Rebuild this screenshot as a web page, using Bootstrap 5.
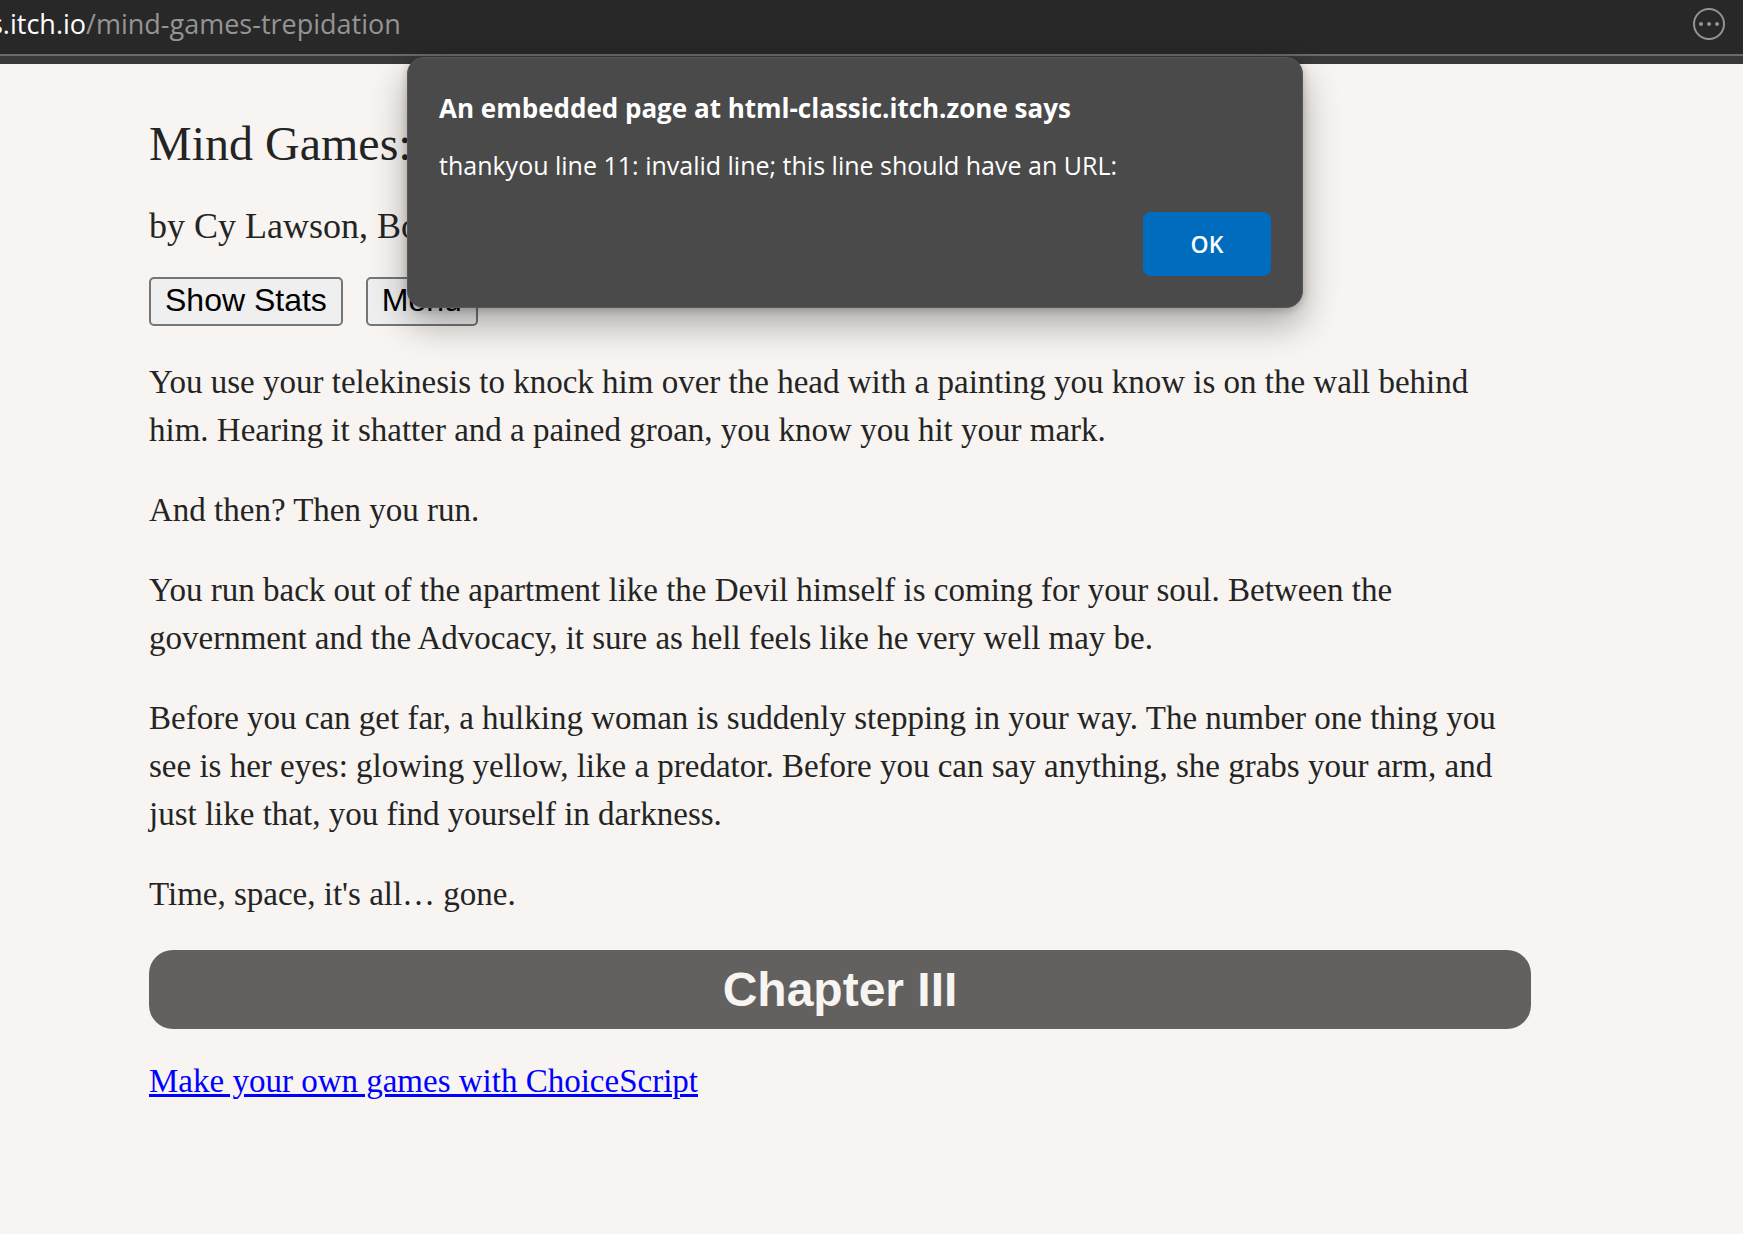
<!DOCTYPE html>
<html lang="en">
<head>
<meta charset="utf-8">
<meta name="viewport" content="width=device-width, initial-scale=1">
<title>Mind Games</title>
<link href="https://cdn.jsdelivr.net/npm/bootstrap@5.3.0/dist/css/bootstrap.min.css" rel="stylesheet">
<style>
body { background: #f7f4f1; color: #242424; font-family: "Liberation Serif", serif; font-size: 33px; line-height: 48px; }
.ui-text { font-family: "Open Sans", "Noto Sans", sans-serif; }
.address-bar { height: 56px; padding: 0 18px 6px 0; background: #282828; border-bottom: 2px solid #6a6a6a; color: #949494; font-size: 27px; line-height: 48px; overflow: hidden; }
.address-bar a { color: inherit; margin-left: -10px; }
.address-host { color: #fff; }
.toolbar-edge { height: 8px; background: #393939; }
.story { padding: 48px 212px 48px 149px; }
.story-title { font-size: 48px; line-height: 64px; margin-bottom: 26px; font-weight: 400; }
.story-by { font-size: 36px; line-height: 48px; margin-bottom: 27px; font-weight: 400; }
.story-actions { gap: 23px; margin-bottom: 32px; }
.story-actions button { height: 49px; padding: 0 14px 2px; border: 2px solid #767676; border-radius: 5px; background: #efefef; color: #000; font-family: "Liberation Sans", sans-serif; font-size: 32px; line-height: 43px; }
.story p { margin-bottom: 32px; }
.chapter { background: #62615f; color: #f7f4f1; border-radius: 24px; font-family: "Liberation Sans", sans-serif; font-size: 48px; line-height: 79px; font-weight: 700; margin-bottom: 28px; }
.story-link { color: #00f; text-decoration-thickness: 3px; }
.alert-box { left: 407px; top: 57px; width: 896px; max-width: 100%; padding: 31px; background: #4a4a4a; border: 1px solid #575757; border-radius: 17px; color: #fff; box-shadow: 0 16px 36px rgba(0,0,0,.32), 0 2px 8px rgba(0,0,0,.2); }
.alert-title { font-size: 26px; line-height: 38px; font-weight: 700; margin-bottom: 18px; }
.alert-text { font-size: 25px; line-height: 40px; margin-bottom: 27px; }
.alert-ok { width: 128px; height: 64px; border: 0; border-radius: 8px; background: #006cbe; color: #fff; font-size: 23px; font-weight: 600; }
</style>
</head>
<body>
<header class="ui-text">
  <div class="address-bar d-flex justify-content-between align-items-center">
    <a class="text-decoration-none text-nowrap" href="#"><span class="address-host">s.itch.io</span>/mind-games-trepidation</a>
    <button class="btn p-0 border-0 d-flex" type="button" aria-label="More">
      <svg width="32" height="32" viewBox="0 0 32 32" fill="#949494"><circle cx="16" cy="16" r="15" fill="none" stroke="#949494" stroke-width="2"/><circle cx="8" cy="16" r="2"/><circle cx="16" cy="16" r="2"/><circle cx="24" cy="16" r="2"/></svg>
    </button>
  </div>
  <div class="toolbar-edge"></div>
</header>
<main class="story">
  <h1 class="story-title">Mind Games:</h1>
  <h2 class="story-by">by Cy Lawson, Bo</h2>
  <div class="story-actions d-flex">
    <button type="button">Show Stats</button>
    <button type="button">Menu</button>
  </div>
  <p>You use your telekinesis to knock him over the head with a painting you know is on the wall behind him. Hearing it shatter and a pained groan, you know you hit your mark.</p>
  <p>And then? Then you run.</p>
  <p>You run back out of the apartment like the Devil himself is coming for your soul. Between the government and the Advocacy, it sure as hell feels like he very well may be.</p>
  <p>Before you can get far, a hulking woman is suddenly stepping in your way. The number one thing you see is her eyes: glowing yellow, like a predator. Before you can say anything, she grabs your arm, and just like that, you find yourself in darkness.</p>
  <p>Time, space, it's all… gone.</p>
  <h2 class="chapter text-center">Chapter III</h2>
  <a class="story-link" href="#">Make your own games with ChoiceScript</a>
</main>
<div class="alert-box ui-text position-absolute" role="alertdialog" aria-labelledby="alertTitle" aria-describedby="alertText">
  <h2 class="alert-title" id="alertTitle">An embedded page at html-classic.itch.zone says</h2>
  <div class="alert-text" id="alertText">thankyou line 11: invalid line; this line should have an URL:</div>
  <div class="d-flex justify-content-end"><button class="alert-ok" type="button">OK</button></div>
</div>
<script src="https://cdn.jsdelivr.net/npm/bootstrap@5.3.0/dist/js/bootstrap.bundle.min.js"></script>
</body>
</html>
